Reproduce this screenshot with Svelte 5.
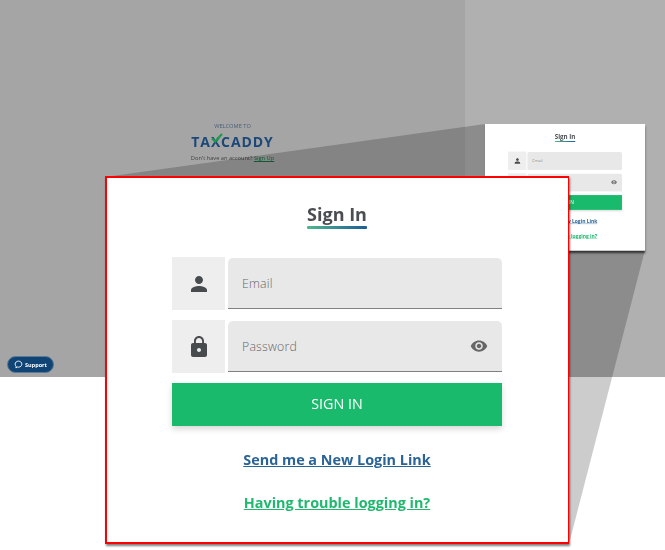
<script>
  const personPath = 'M12 12c2.21 0 4-1.79 4-4s-1.79-4-4-4-4 1.79-4 4 1.79 4 4 4zm0 2c-2.67 0-8 1.34-8 4v2h16v-2c0-2.66-5.33-4-8-4z'
  const lockPath = 'M18 8h-1V6c0-2.76-2.24-5-5-5S7 3.24 7 6v2H6c-1.1 0-2 .9-2 2v10c0 1.1.9 2 2 2h12c1.1 0 2-.9 2-2V10c0-1.1-.9-2-2-2zm-6 9c-1.1 0-2-.9-2-2s.9-2 2-2 2 .9 2 2-.9 2-2 2zm3.1-9H8.9V6c0-1.71 1.39-3.1 3.1-3.1 1.71 0 3.1 1.39 3.1 3.1v2z'
  const eyePath = 'M12 4.5C7 4.5 2.73 7.61 1 12c1.73 4.39 6 7.5 11 7.5s9.27-3.11 11-7.5c-1.73-4.39-6-7.5-11-7.5zM12 17c-2.76 0-5-2.24-5-5s2.24-5 5-5 5 2.24 5 5-2.24 5-5 5zm0-8c-1.66 0-3 1.34-3 3s1.34 3 3 3 3-1.34 3-3-1.34-3-3-3z'
</script>

{#snippet field(iconPath, placeholder, hasEye)}
  <div class="field">
    <div class="field-icon">
      <svg viewBox="0 0 24 24" width="24" height="24"><path d={iconPath} fill="#484b4e" /></svg>
    </div>
    <div class="field-input">
      <span class="placeholder">{placeholder}</span>
      {#if hasEye}
        <svg viewBox="0 0 24 24" width="18" height="18"><path d={eyePath} fill="#666" /></svg>
      {/if}
    </div>
  </div>
{/snippet}

{#snippet signIn()}
  <h1><span>Sign In</span></h1>
  <div class="form">
    {@render field(personPath, 'Email', false)}
    {@render field(lockPath, 'Password', true)}
    <div class="button">SIGN IN</div>
    <div class="link link-blue">Send me a New Login Link</div>
    <div class="link link-green">Having trouble logging in?</div>
  </div>
{/snippet}

<div class="shot">
  <div class="backdrop">
    <div class="left">
      <div class="welcome">WELCOME TO</div>
      <div class="logo">
        <span>TAXCADDY</span>
        <svg class="check" viewBox="0 0 12 10" width="12" height="10">
          <path d="M1 5.5 4.2 8.5 11 1" fill="none" stroke="#1f9a4d" stroke-width="2.2" />
        </svg>
      </div>
      <div class="account">Don't have an account? <span>Sign Up</span></div>
    </div>
    <div class="right"></div>
  </div>

  <div class="support">
    <svg viewBox="0 0 24 24" width="9" height="9">
      <path d="M12 3c-5 0-9 3.4-9 8 0 2.3 1 4.300 2.700 5.700L5 21l4.600-2.300c.8.200 1.600.3 2.400.3 5 0 9-3.500 9-8s-4-8-9-8z" fill="none" stroke="#fff" stroke-width="2.400" />
    </svg>
    <span>Support</span>
  </div>

  <svg class="callout" viewBox="0 0 665 550" width="665" height="550">
    <polygon points="105,177 485,124 645,250 569,544" fill="rgba(0,0,0,0.2)" />
  </svg>

  <div class="card mini">{@render signIn()}</div>
  <div class="card big">{@render signIn()}</div>
</div>

<style>
  :global(body) {
    background: #fff;
    font-family: "Open Sans", sans-serif;
  }

  .shot {
    position: relative;
    width: 665px;
    height: 550px;
    overflow: hidden;
    background: #fff;
  }

  .backdrop {
    display: flex;
    height: 377px;
  }

  .left {
    width: 465px;
    background: #a5a5a5;
    display: flex;
    flex-direction: column;
    align-items: center;
    padding-top: 122px;
    box-sizing: border-box;
    filter: blur(0.35px);
  }

  .right {
    flex: 1;
    background: #b0b0b0;
  }

  .welcome {
    font-size: 5.700px;
    line-height: 9px;
    color: #4b5f78;
  }

  .logo {
    position: relative;
    margin-top: 2px;
    font-weight: 700;
    font-size: 14px;
    line-height: 18px;
    letter-spacing: 0.9px;
    color: #1c4878;
  }

  .check {
    position: absolute;
    left: 20px;
    top: 0;
  }

  .account {
    font-size: 5.700px;
    line-height: 9px;
    margin-top: 3px;
    color: #444;
  }

  .account span {
    color: #12713f;
    text-decoration: underline;
  }

  .support {
    position: absolute;
    left: 7px;
    top: 356px;
    width: 47px;
    height: 17px;
    box-sizing: border-box;
    border: 1px solid #5b7a98;
    border-radius: 9px;
    background: #0f4475;
    display: flex;
    align-items: center;
    justify-content: center;
    gap: 2px;
    color: #fff;
    font-size: 5.500px;
    font-weight: 700;
    filter: blur(0.25px);
  }

  .callout {
    position: absolute;
    left: 0;
    top: 0;
  }

  .card {
    position: absolute;
    width: 464px;
    box-sizing: border-box;
    background: #fff;
    padding-top: 23px;
  }

  .big {
    left: 105px;
    top: 176px;
    height: 368px;
    border: 2px solid #f00;
    border-right-width: 1px;
    padding-right: 1px;
    box-shadow: 1px 2px 2px rgba(0, 0, 0, 0.5);
  }

  .mini {
    left: 485px;
    top: 124px;
    height: 367px;
    border: 1px solid #fff;
    transform: scale(0.345);
    transform-origin: top left;
    box-shadow: 3px 6px 6px rgba(0, 0, 0, 0.7);
    filter: blur(0.8px);
  }

  h1 {
    margin: 0;
    text-align: center;
    font-size: 18px;
    line-height: 26px;
    font-weight: 700;
    color: #4a4d52;
  }

  h1 span {
    display: inline-block;
    position: relative;
  }

  h1 span::after {
    content: '';
    position: absolute;
    left: 0;
    right: 0;
    bottom: -2px;
    height: 3px;
    border-radius: 1px;
    background: linear-gradient(90deg, #4fb98e, #1d5c98);
  }

  .form {
    width: 330px;
    margin: 30px auto 0;
    display: flex;
    flex-direction: column;
  }

  .field {
    display: flex;
    gap: 3px;
    height: 53px;
    margin-bottom: 10px;
  }

  .field-icon {
    width: 53px;
    background: #eee;
    display: flex;
    align-items: center;
    justify-content: center;
  }

  .field-input {
    flex: 1;
    margin-top: 1px;
    height: 51px;
    box-sizing: border-box;
    background: #e8e8e8;
    border-bottom: 1px solid #808080;
    border-radius: 5px 5px 0 0;
    display: flex;
    align-items: center;
    justify-content: space-between;
    padding: 0 14px;
  }

  .placeholder {
    font-size: 12.300px;
    font-weight: 300;
    letter-spacing: 0.2px;
    color: #666;
  }

  .button {
    height: 43px;
    background: #19ba6b;
    box-shadow: 0 3px 6px rgba(0, 0, 0, 0.16);
    color: #fff;
    font-size: 14.300px;
    padding-bottom: 2px;
    box-sizing: border-box;
    display: flex;
    align-items: center;
    justify-content: center;
  }

  .link {
    text-align: center;
    text-decoration: underline;
    font-size: 14.400px;
    line-height: 20px;
    font-weight: 700;
  }

  .link-blue {
    margin-top: 24px;
    color: #2a6496;
  }

  .link-green {
    margin-top: 23px;
    color: #1fb86e;
  }
</style>
